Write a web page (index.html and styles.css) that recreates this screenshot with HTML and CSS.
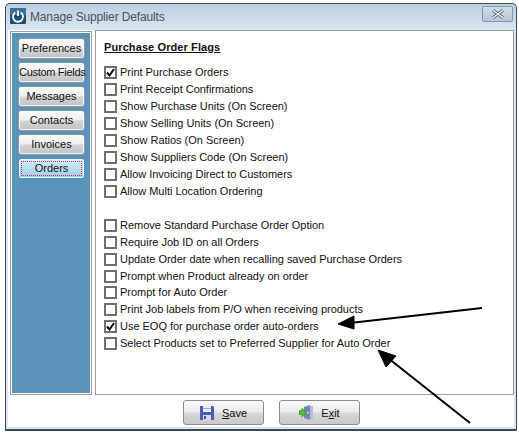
FILE: index.html
```html
<!DOCTYPE html>
<html lang="en">
<head>
    <meta charset="UTF-8">
    <title>Manage Supplier Defaults</title>
    <link rel="stylesheet" href="styles.css">
</head>
<body>
    <div class="window">
        <div class="titlebar">
            <svg class="app-icon" width="16" height="16" viewBox="0 0 16 16">
                <rect width="16" height="16" rx="1" fill="#1d4f70"/>
                <rect width="16" height="7" rx="1" fill="#3a7299"/>
                <path d="M5.2 4.6a5 5 0 1 0 5.6 0" fill="none" stroke="#fff" stroke-width="1.8"/>
                <path d="M8 2.5v5.5" stroke="#fff" stroke-width="1.8"/>
            </svg>
            <span class="title">Manage Supplier Defaults</span>
            <div class="close-btn">
                <svg width="14" height="10" viewBox="0 0 14 10">
                    <path d="M2 1.2l10 7.6M12 1.2l-10 7.6" stroke="#5a6470" stroke-width="3"/>
                    <path d="M2 1.2l10 7.6M12 1.2l-10 7.6" stroke="#fff" stroke-width="1.2"/>
                </svg>
            </div>
        </div>
        <div class="content">
            <div class="panels">
                <div class="sidebar">
                    <button class="tab">Preferences</button>
                    <button class="tab tight">Custom Fields</button>
                    <button class="tab">Messages</button>
                    <button class="tab">Contacts</button>
                    <button class="tab">Invoices</button>
                    <button class="tab active"><span>Orders</span></button>
                </div>
                <div class="main">
                    <h3 class="heading">Purchase Order Flags</h3>
                    <div class="flags">
                        <label class="flag"><span class="box"><svg width="9" height="9" viewBox="0 0 9 9"><path d="M1 4.5l2.5 3L8 1" fill="none" stroke="#111" stroke-width="2"/></svg></span>Print Purchase Orders</label>
                        <label class="flag"><span class="box"></span>Print Receipt Confirmations</label>
                        <label class="flag"><span class="box"></span>Show Purchase Units (On Screen)</label>
                        <label class="flag"><span class="box"></span>Show Selling Units (On Screen)</label>
                        <label class="flag"><span class="box"></span>Show Ratios (On Screen)</label>
                        <label class="flag"><span class="box"></span>Show Suppliers Code (On Screen)</label>
                        <label class="flag"><span class="box"></span>Allow Invoicing Direct to Customers</label>
                        <label class="flag"><span class="box"></span>Allow Multi Location Ordering</label>
                    </div>
                    <div class="flags second">
                        <label class="flag"><span class="box"></span>Remove Standard Purchase Order Option</label>
                        <label class="flag"><span class="box"></span>Require Job ID on all Orders</label>
                        <label class="flag"><span class="box"></span>Update Order date when recalling saved Purchase Orders</label>
                        <label class="flag"><span class="box"></span>Prompt when Product already on order</label>
                        <label class="flag"><span class="box"></span>Prompt for Auto Order</label>
                        <label class="flag"><span class="box"></span>Print Job labels from P/O when receiving products</label>
                        <label class="flag"><span class="box"><svg width="9" height="9" viewBox="0 0 9 9"><path d="M1 4.5l2.5 3L8 1" fill="none" stroke="#111" stroke-width="2"/></svg></span>Use EOQ for purchase order auto-orders</label>
                        <label class="flag"><span class="box"></span>Select Products set to Preferred Supplier for Auto Order</label>
                    </div>
                </div>
            </div>
            <div class="footer">
                <button class="action">
                    <svg width="14" height="14" viewBox="0 0 14 14">
                        <path d="M0 0h13l1 1v13H0z" fill="#4a5cb4"/>
                        <rect x="3" y="0" width="8" height="6" fill="#e8ecf6"/>
                        <rect x="3" y="2" width="8" height="1" fill="#a4aed0"/>
                        <rect x="3" y="9" width="8" height="5" fill="#d5d9e6"/>
                        <rect x="4" y="10" width="2" height="3" fill="#3f51a8"/>
                    </svg>
                    <span><u>S</u>ave</span>
                </button>
                <button class="action">
                    <svg width="14" height="15" viewBox="0 0 14 15">
                        <path d="M5 2l6-2v15l-6-2z" fill="#7487b4"/>
                        <path d="M11 1h3v13h-3z" fill="#b4bdd2"/>
                        <circle cx="9" cy="7.5" r="1" fill="#e0e4f0"/>
                        <path d="M0 5.500h3V3l4.500 4.500L3 12V9.500H0z" fill="#4fc12e" stroke="#2f8a1a" stroke-width=".6"/>
                    </svg>
                    <span>E<u>x</u>it</span>
                </button>
            </div>
        </div>
    </div>

    <!-- annotation arrows drawn on top of the screenshot -->
    <svg class="arrows" width="519" height="433" viewBox="0 0 519 433">
        <path d="M482 308L350 323" stroke="#000" stroke-width="2" fill="none"/>
        <path d="M338 324L354 316L354 329z" fill="#000" stroke="#000"/>
        <path d="M470 423L388 358" stroke="#000" stroke-width="2" fill="none"/>
        <path d="M378 350L396 356L386 367z" fill="#000" stroke="#000"/>
    </svg>
</body>
</html>
```

FILE: styles.css
```css
html, body {
    margin: 0;
    height: 100%;
    background-color: #fff;
}
body {
    width: 519px;
    height: 433px;
    overflow: hidden;
    font-family: 'Liberation Sans', Arial, sans-serif;
    font-size: 11px;
    color: #111;
    padding: 3px 2px 2px 5px;
    box-sizing: border-box;
}
.window {
    height: 428px;
    display: flex;
    flex-direction: column;
    border: 1px solid #3f4a52;
    border-bottom-width: 2px;
    border-radius: 5px 5px 0 0;
    background: linear-gradient(#bccfdf, #d8e6f3 26px);
    padding: 0 2px 2px;
    box-sizing: border-box;
}
.titlebar {
    height: 24px;
    flex: none;
    display: flex;
    align-items: center;
    padding-left: 2px;
}
.app-icon {
    flex: none;
}
.title {
    margin-left: 4px;
    margin-top: 1px;
    font-size: 12px;
    letter-spacing: -0.15px;
    color: #47535e;
}
.close-btn {
    width: 29px;
    height: 14px;
    margin-left: auto;
    margin-right: 1px;
    margin-top: -4px;
    border: 1px solid #8297ab;
    border-radius: 2px;
    background: linear-gradient(#d3dfe9, #b6c7d6);
    display: flex;
    align-items: center;
    justify-content: center;
}
.content {
    flex: 1;
    display: flex;
    flex-direction: column;
    background-color: #fff;
    border-top: 2px solid #d8e6f3;
}
.panels {
    height: 365px;
    flex: none;
    display: flex;
    gap: 3px;
    padding: 0 0 0 2px;
    box-sizing: border-box;
}
.sidebar {
    width: 82px;
    flex: none;
    margin-top: 1px;
    box-sizing: border-box;
    border: 1px solid #9c9c9c;
    box-shadow: inset 0 0 0 1px #fff;
    background-color: #5a93b7;
    padding: 6px 7px;
    display: flex;
    flex-direction: column;
    gap: 3px;
}
.tab {
    width: 67px;
    height: 21px;
    padding: 0 0 2px;
    flex: none;
    font-family: inherit;
    font-size: 11px;
    color: #111;
    white-space: nowrap;
    border: 1px solid #8a9aa6;
    border-radius: 3px;
    background: linear-gradient(#fafafa, #f0f0f0 45%, #d2d2d2 55%, #c4c4c4);
    box-shadow: inset 0 0 0 1px #f5f5f5;
}
.tab.tight {
    letter-spacing: -0.3px;
}
.tab.active {
    border-color: #3c9ccf;
    background: linear-gradient(#d8eefa, #b8dff2 50%, #9ccde6);
    padding: 2px;
}
.tab.active span {
    display: block;
    height: 15px;
    line-height: 13px;
    box-sizing: border-box;
    border: 1px dotted #d0285a;
}
.main {
    flex: 1;
    border: 1px solid #9c9c9c;
    padding: 9px 8px;
}
.heading {
    margin: 0 0 12px;
    font-size: 11px;
    line-height: 14px;
    font-weight: bold;
    text-decoration: underline;
    letter-spacing: 0.1px;
}
.flags {
    display: flex;
    flex-direction: column;
    gap: 4px;
}
.flags.second {
    margin-top: 21px;
    gap: 3.85px;
}
.flag {
    display: flex;
    align-items: flex-start;
    gap: 3px;
    height: 13px;
    line-height: 12px;
    letter-spacing: -0.02px;
    white-space: nowrap;
}
.box {
    width: 13px;
    height: 13px;
    flex: none;
    box-sizing: border-box;
    border: 2px solid #6f6f6f;
    background-color: #fff;
    display: flex;
    align-items: center;
    justify-content: center;
}
.footer {
    flex: 1;
    display: flex;
    justify-content: center;
    gap: 15px;
    padding: 5px 0 0 21px;
}
.action {
    width: 81px;
    height: 25px;
    padding: 0;
    font-family: inherit;
    font-size: 11px;
    color: #111;
    border: 1px solid #8b8b8b;
    border-radius: 3px;
    background: linear-gradient(#f8f8f8, #ececec 45%, #d6d6d6 55%, #cacaca);
    display: flex;
    align-items: center;
    justify-content: center;
    gap: 8px;
}
.arrows {
    position: absolute;
    left: 0;
    top: 0;
    pointer-events: none;
}
```
